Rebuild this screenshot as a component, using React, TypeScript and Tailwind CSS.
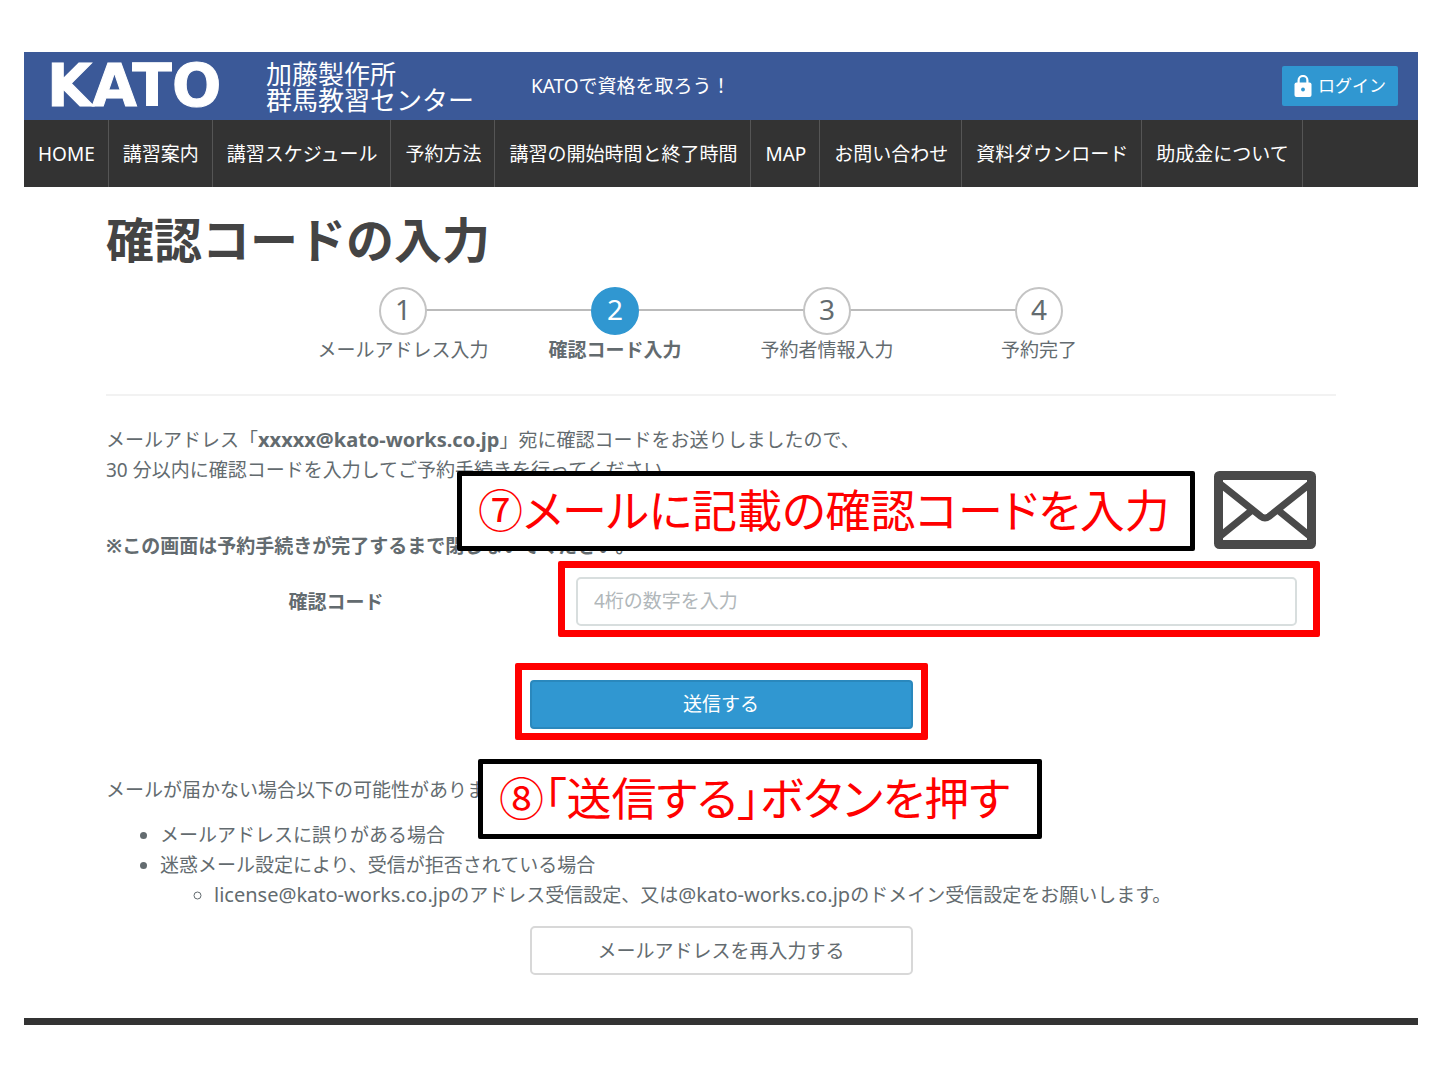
import type { ReactNode } from 'react'

const navItems = [
  'HOME',
  '講習案内',
  '講習スケジュール',
  '予約方法',
  '講習の開始時間と終了時間',
  'MAP',
  'お問い合わせ',
  '資料ダウンロード',
  '助成金について',
]

const steps = ['メールアドレス入力', '確認コード入力', '予約者情報入力', '予約完了']
const current = 1

function LockIcon() {
  return (
    <svg viewBox="0 0 18 22" className="h-[22px] w-[18px]" fill="none" aria-hidden="true">
      <path d="M4.6 9V5.4a4.4 4.4 0 0 1 8.8 0V9" stroke="#fff" strokeWidth="2.2" />
      <rect x="0.5" y="7.5" width="17" height="14.5" rx="2" fill="#fff" />
      <circle cx="9" cy="14.5" r="1.9" fill="#3097d1" />
    </svg>
  )
}

function MailIcon() {
  return (
    <svg viewBox="0 0 102 78" className="h-[78px] w-[102px]" fill="none" stroke="#4a4a4a" aria-hidden="true">
      <rect x="4.5" y="4.5" width="93" height="69" rx="1" strokeWidth="9" strokeLinejoin="round" />
      <path d="M5 12L47 45.5q4 3 8 0L97 12" strokeWidth="7" />
      <path d="M5 66l32-26M97 66L65 40" strokeWidth="7" />
    </svg>
  )
}

function Callout({ className, children }: { className: string; children: ReactNode }) {
  return (
    <p
      className={`absolute z-10 whitespace-nowrap rounded-xs border-5 border-black bg-white pb-1 pl-4 font-['Noto_Sans_CJK_JP',sans-serif] text-[45px] leading-[66px] text-[#ff0000] [font-feature-settings:'palt'] ${className}`}
    >
      {children}
    </p>
  )
}

export default function App() {
  return (
    <div className="min-h-screen bg-white pt-[52px] pr-[21px] pb-[55px] pl-6 font-['Noto_Sans','Noto_Sans_CJK_JP',sans-serif] text-[19px] leading-[30px] text-[#636b6f]">
      <header>
        <div className="flex h-[68px] items-center bg-[#3b5998] pr-5 pl-[23px] text-white">
          <a href="#" className="flex items-center">
            <span className="w-[219px] font-['DejaVu_Sans',sans-serif] text-[58px] leading-[60px] font-bold [-webkit-text-stroke:1px_#fff]">
              KATO
            </span>
            <span className="w-[265px] font-['Noto_Sans_CJK_JP',sans-serif] text-[26px] leading-[26px]">
              加藤製作所
              <br />
              群馬教習センター
            </span>
          </a>
          <p>KATOで資格を取ろう！</p>
          <button className="ml-auto flex h-10 items-center gap-1.5 rounded-xs bg-[#3097d1] px-3 text-[17px]">
            <LockIcon />
            ログイン
          </button>
        </div>
        <nav className="flex h-[67px] bg-[#333333] text-white">
          {navItems.map(item => (
            <a key={item} href="#" className="flex items-center border-r border-[#555555] pr-[13px] pl-[14px] whitespace-nowrap">
              {item}
            </a>
          ))}
        </nav>
      </header>

      <main className="px-[82px]">
        <h1 className="pt-5 text-[48px] leading-[66px] font-bold text-[#444444]">確認コードの入力</h1>

        <ol className="mx-auto mt-[14px] grid max-w-[848px] grid-cols-4">
          {steps.map((label, i) => (
            <li key={label} className={`relative flex flex-col items-center ${i === current ? 'font-bold' : ''}`}>
              {i > 0 && <span className="absolute top-[22px] right-1/2 h-0.5 w-full bg-[#bbbbbb]" />}
              <span
                className={`z-1 flex size-12 items-center justify-center rounded-full border-2 pb-1 text-[28px] font-normal ${
                  i === current ? 'border-[#3097d1] bg-[#3097d1] text-white' : 'border-[#c4c4c4] bg-white'
                }`}
              >
                {i + 1}
              </span>
              <span className="whitespace-nowrap">{label}</span>
            </li>
          ))}
        </ol>

        <hr className="mt-[29px] border-t-2 border-[#f2f2f2]" />

        <div className="relative mt-[29px] flex items-end justify-between">
          <div>
            <p>
              メールアドレス「<b className="text-[20px]">xxxxx@kato-works.co.jp</b>」宛に確認コードをお送りしましたので、
              <br />
              30 分以内に確認コードを入力してご予約手続きを行ってください。
            </p>
            <p className="mt-[46px] font-bold">※この画面は予約手続きが完了するまで閉じないでください。</p>
          </div>
          <div className="pr-5 pb-3">
            <MailIcon />
          </div>
          <Callout className="top-[46px] left-[351px] w-[738px]">⑦メールに記載の確認コードを入力</Callout>
        </div>

        <form onSubmit={e => e.preventDefault()}>
          <div className="mt-4 grid grid-cols-[460fr_731fr] items-center pr-[39px]">
            <label htmlFor="code" className="text-center font-bold">
              確認コード
            </label>
            <div className="relative ml-[10px]">
              <input
                id="code"
                type="text"
                placeholder="4桁の数字を入力"
                className="block h-[49px] w-full rounded-[5px] border-2 border-[#d8dede] px-4 pb-0.5 placeholder:text-[#b1b7ba]"
              />
              <span className="pointer-events-none absolute -top-4 -right-[23px] -bottom-[11px] -left-[18px] rounded-xs border-7 border-[#ff0000]" />
            </div>
          </div>
          <div className="relative mx-auto mt-[54px] w-[383px]">
            <button type="submit" className="block h-[49px] w-full rounded-sm border-2 border-[#2a88bd] bg-[#3097d1] pb-0.5 text-white">
              送信する
            </button>
            <span className="pointer-events-none absolute -top-[17px] -right-[15px] -bottom-[11px] -left-[15px] rounded-xs border-7 border-[#ff0000]" />
          </div>
        </form>

        <div className="relative mt-[46px]">
          <p>メールが届かない場合以下の可能性があります。</p>
          <Callout className="-top-4 left-[372px] w-[564px]">⑧「送信する」ボタンを押す</Callout>
        </div>
        <ul className="mt-[15px] list-disc pl-[54px]">
          <li>メールアドレスに誤りがある場合</li>
          <li>
            迷惑メール設定により、受信が拒否されている場合
            <ul className="list-[circle] pl-[54px]">
              <li>
                <span className="text-[20px]">license@kato-works.co.jp</span>のアドレス受信設定、又は
                <span className="text-[20px]">@kato-works.co.jp</span>のドメイン受信設定をお願いします。
              </li>
            </ul>
          </li>
        </ul>
        <button className="mx-auto mt-4 block h-[49px] w-[383px] rounded-[5px] border-2 border-[#d8d8d8] bg-white">
          メールアドレスを再入力する
        </button>
      </main>
      <footer className="mt-[43px] h-[7px] bg-[#333333]" />
    </div>
  )
}
